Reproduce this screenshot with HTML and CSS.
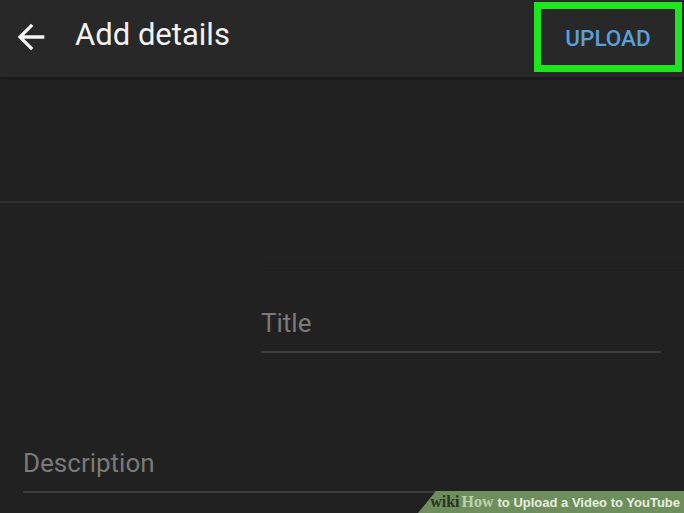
FILE: index.html
```html
<!DOCTYPE html>
<html>
<head>
<meta charset="utf-8">
<link rel="stylesheet" href="styles.css">
</head>
<body>
<div class="screen">
  <header class="appbar">
    <svg class="back" viewBox="0 0 24 24" width="40" height="40"><path fill="#f4f4f4" d="M20 11H7.83l5.59-5.59L12 4l-8 8 8 8 1.41-1.41L7.83 13H20v-2z"/></svg>
    <h1 class="title">Add details</h1>
    <div class="upload">UPLOAD</div>
  </header>
  <div class="thumb-area"></div>
  <div class="ghost"></div>
  <div class="field field-title"><span class="placeholder">Title</span></div>
  <div class="field field-desc"><span class="placeholder">Description</span></div>
  <div class="watermark"><span class="wm-wiki">wiki</span><span class="wm-how">How</span><span class="wm-rest">to Upload a Video to YouTube</span></div>
</div>
</body>
</html>
```

FILE: styles.css
```css
html, body {
  margin: 0;
  padding: 0;
  background: #212121;
}
.screen {
  position: relative;
  width: 684px;
  height: 513px;
  overflow: hidden;
  background: #212121;
  font-family: Roboto, "Liberation Sans", sans-serif;
}
.appbar {
  height: 77px;
  background: #282828;
  display: flex;
  align-items: center;
  padding-left: 11px;
  box-sizing: border-box;
  box-shadow: 0 1px 0 #1a1a1a, 0 2px 2px rgba(0,0,0,0.25);
  position: relative;
}
.back {
  display: block;
  margin-top: -3px;
}
.title {
  margin: 0 0 0 24px;
  font-size: 31px;
  font-weight: 400;
  color: #f2f2f2;
  line-height: 36px;
  margin-top: -7px;
}
.upload {
  margin-left: auto;
  margin-right: 2px;
  align-self: flex-start;
  margin-top: 2px;
  width: 148px;
  height: 70px;
  box-sizing: border-box;
  border: 7px solid #1ee61e;
  display: flex;
  align-items: center;
  justify-content: center;
  color: #5b9fd8;
  font-size: 22.5px;
  font-weight: 500;
  padding-top: 1px;
}
.thumb-area {
  height: 124px;
  border-bottom: 2px solid #2e2e2e;
}
.ghost {
  margin: 54px 0 0 258px;
  height: 10px;
  border-top: 1px solid #252525;
  border-bottom: 1px solid #252525;
}
.field {
  border-bottom: 2px solid #3c3c3c;
  box-sizing: border-box;
}
.placeholder {
  font-size: 26px;
  line-height: 30px;
  color: #7a7a7a;
  display: block;
}
.field-title {
  margin: 39px 23px 0 261px;
  padding-bottom: 13px;
}
.field-desc {
  margin: 95px 0 0 23px;
  padding-bottom: 13px;
}
.watermark {
  position: absolute;
  right: 0;
  bottom: 0;
  width: 266px;
  height: 22px;
  background: #6e8f5d;
  clip-path: polygon(18px 0, 100% 0, 100% 100%, 0 100%);
  display: flex;
  align-items: center;
  justify-content: flex-end;
  padding-right: 4px;
  box-sizing: border-box;
  white-space: nowrap;
}
.wm-wiki {
  font-family: "Liberation Serif", serif;
  font-weight: 700;
  font-size: 16px;
  color: #26331f;
}
.wm-how {
  font-family: "Liberation Serif", serif;
  font-weight: 700;
  font-size: 16px;
  color: #bcd3ab;
  margin-left: 2px;
}
.wm-rest {
  font-family: "Liberation Sans", Arial, sans-serif;
  font-weight: 700;
  font-size: 13px;
  color: #e6eedd;
  margin-left: 4px;
}
```
